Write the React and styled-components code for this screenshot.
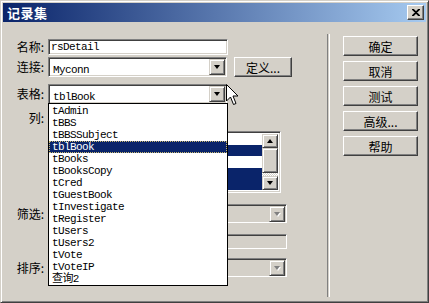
import React from 'react';
import styled, { createGlobalStyle } from 'styled-components';

const Global = createGlobalStyle`
  html, body { margin: 0; padding: 0; background: #d4d0c8; }
  body { font-family: "Noto Sans CJK SC", "Liberation Sans", sans-serif; font-size: 12px; }
`;

const Window = styled.div`
  position: relative;
  width: 429px;
  height: 303px;
  box-sizing: border-box;
  background: #d4d0c8;
  border-top: 1px solid #d4d0c8;
  border-left: 1px solid #d4d0c8;
  border-right: 1px solid #404040;
  border-bottom: 1px solid #404040;
  box-shadow: inset 1px 1px #ffffff, inset -1px -1px #808080;
  padding: 2px;
  display: flex;
  flex-direction: column;
  overflow: hidden;
`;

const TitleBar = styled.div`
  height: 19px;
  display: flex;
  align-items: center;
  justify-content: space-between;
  padding: 0 2px 0 4px;
  background: linear-gradient(to right, #0a246a, #a6caf0);
`;

const Title = styled.span`
  color: #fff;
  font-weight: bold;
  font-size: 13px;
  letter-spacing: 0.5px;
  line-height: 1;
`;

const CloseBox = styled.div`
  width: 17px;
  height: 15px;
  box-sizing: border-box;
  background: #d4d0c8;
  border-top: 1px solid #fff;
  border-left: 1px solid #fff;
  border-right: 1px solid #404040;
  border-bottom: 1px solid #404040;
  box-shadow: inset -1px -1px #808080;
  display: flex;
  align-items: center;
  justify-content: center;
`;

const Body = styled.div`
  flex: 1;
  display: flex;
  position: relative;
`;

const FormPane = styled.div`
  width: 324px;
  display: flex;
  flex-direction: column;
`;

const Row = styled.div`
  display: flex;
  align-items: ${p => p.$align || 'center'};
  margin-top: ${p => p.$top}px;
  height: ${p => p.$h}px;
`;

const Label = styled.div`
  width: 41px;
  padding-right: 4px;
  text-align: right;
  font-size: 12px;
  line-height: 12px;
  color: #000;
  flex-shrink: 0;
`;

const Sunken = styled.div`
  box-sizing: border-box;
  height: 100%;
  width: ${p => p.$w}px;
  background: ${p => (p.$disabled ? '#d4d0c8' : '#ffffff')};
  border-top: 1px solid #808080;
  border-left: 1px solid #808080;
  border-right: 1px solid #ffffff;
  border-bottom: 1px solid #ffffff;
  box-shadow: inset 1px 1px #404040, inset -1px -1px #d4d0c8;
  padding: 1px 2px 1px 2px;
  display: flex;
  align-items: center;
  position: relative;
`;

const MonoText = styled.span`
  font-family: "Liberation Mono", "Noto Sans CJK SC", monospace;
  font-size: 11px;
  letter-spacing: -0.6px;
  line-height: 11px;
  color: ${p => p.$color || '#000'};
  white-space: nowrap;
`;

const SelectValue = styled.div`
  flex: 1;
  padding-left: 2px;
`;

const DropButton = styled.div`
  width: 16px;
  height: 16px;
  box-sizing: border-box;
  background: #d4d0c8;
  border-top: 1px solid #d4d0c8;
  border-left: 1px solid #d4d0c8;
  border-right: 1px solid #404040;
  border-bottom: 1px solid #404040;
  box-shadow: inset 1px 1px #fff, inset -1px -1px #808080;
  display: flex;
  align-items: center;
  justify-content: center;
  margin-right: -1px;
`;

const Triangle = styled.div`
  width: 0;
  height: 0;
  border-left: 3.5px solid transparent;
  border-right: 3.5px solid transparent;
  border-${p => (p.$up ? 'bottom' : 'top')}: 4px solid ${p => (p.$disabled ? '#808080' : '#000')};
  filter: ${p => (p.$disabled ? 'drop-shadow(1px 1px 0 #fff)' : 'none')};
`;

const Button = styled.div`
  box-sizing: border-box;
  width: ${p => p.$w || 75}px;
  height: 20px;
  margin-left: ${p => p.$ml || 0}px;
  background: #d4d0c8;
  border-top: 1px solid #fff;
  border-left: 1px solid #fff;
  border-right: 1px solid #404040;
  border-bottom: 1px solid #404040;
  box-shadow: inset -1px -1px #808080;
  display: flex;
  align-items: center;
  justify-content: center;
  font-size: 12px;
  color: #000;
`;

const ListBox = styled(Sunken)`
  padding: 2px;
  align-items: stretch;
`;

const ListRows = styled.div`
  flex: 1;
  display: flex;
  flex-direction: column;
`;

const ListRow = styled.div`
  height: 12.5px;
  background: ${p => (p.$sel ? '#0a246a' : '#fff')};
`;

const ScrollBar = styled.div`
  width: 16px;
  display: flex;
  flex-direction: column;
`;

const ScrollButton = styled(DropButton)`
  margin-right: 0;
  height: ${p => p.$h || 14}px;
`;

const Track = styled.div`
  flex: 1;
  background-color: #fff;
  background-image: repeating-conic-gradient(#d4d0c8 0 25%, #fff 0 50%);
  background-size: 2px 2px;
`;

const Separator = styled.div`
  width: 1px;
  margin-top: 12px;
  margin-bottom: 3px;
  border-left: 1px solid #808080;
  border-right: 1px solid #ffffff;
`;

const ButtonPane = styled.div`
  display: flex;
  flex-direction: column;
  padding-left: 13px;
  padding-top: 14px;
  gap: 5px;
`;

const Popup = styled.div`
  position: absolute;
  left: 45px;
  top: 81px;
  width: 180px;
  box-sizing: border-box;
  background: #fff;
  border: 1px solid #000;
  padding: 1px 0 0 0;
  display: flex;
  flex-direction: column;
  z-index: 2;
`;

const PopupItem = styled.div`
  height: 12px;
  display: flex;
  align-items: center;
  padding-left: 3px;
  background: ${p => (p.$sel ? '#0a246a' : 'transparent')};
  outline: ${p => (p.$sel ? '1px dotted #c8b870' : 'none')};
  outline-offset: -1px;
`;

const Cursor = styled.svg`
  position: absolute;
  left: 223px;
  top: 62px;
  z-index: 3;
`;

function Select({ w, value, disabled }) {
  return (
    <Sunken $w={w} $disabled={disabled}>
      <SelectValue>{value && <MonoText>{value}</MonoText>}</SelectValue>
      <DropButton>
        <Triangle $disabled={disabled} />
      </DropButton>
    </Sunken>
  );
}

const tables = [
  'tAdmin', 'tBBS', 'tBBSSubject', 'tblBook', 'tBooks', 'tBooksCopy', 'tCred',
  'tGuestBook', 'tInvestigate', 'tRegister', 'tUsers', 'tUsers2', 'tVote', 'tVoteIP', '查询2',
];

export default function App() {
  return (
    <>
      <Global />
      <Window>
        <TitleBar>
          <Title>记录集</Title>
          <CloseBox>
            <svg width="8" height="7" viewBox="0 0 8 7">
              <path d="M0 0 L7 7 M1 0 L8 7 M7 0 L0 7 M8 0 L1 7" stroke="#000" strokeWidth="1.2" />
            </svg>
          </CloseBox>
        </TitleBar>
        <Body>
          <FormPane>
            <Row $top={17} $h={16}>
              <Label>名称:</Label>
              <Sunken $w={180}>
                <MonoText>rsDetail</MonoText>
              </Sunken>
            </Row>
            <Row $top={2} $h={20}>
              <Label>连接:</Label>
              <Select w={179} value="Myconn" />
              <Button $w={58} $ml={7}>定义...</Button>
            </Row>
            <Row $top={7} $h={20}>
              <Label>表格:</Label>
              <Select w={179} value="tblBook" />
            </Row>
            <Row $top={8} $h={12}>
              <Label>列:</Label>
            </Row>
            <Row $top={7} $h={62} $align="flex-start">
              <Label />
              <ListBox $w={233}>
                <ListRows>
                  <ListRow />
                  <ListRow $sel />
                  <ListRow />
                  <ListRow $sel />
                  <ListRow $sel />
                </ListRows>
                <ScrollBar>
                  <ScrollButton $h={14}><Triangle $up /></ScrollButton>
                  <ScrollButton $h={25} />
                  <Track />
                  <ScrollButton $h={14}><Triangle /></ScrollButton>
                </ScrollBar>
              </ListBox>
            </Row>
            <Row $top={11} $h={19}>
              <Label>筛选:</Label>
              <Select w={239} disabled />
            </Row>
            <Row $top={11} $h={15}>
              <Label />
              <Sunken $w={239} $disabled />
            </Row>
            <Row $top={9} $h={19}>
              <Label>排序:</Label>
              <Select w={239} disabled />
            </Row>
          </FormPane>
          <Separator />
          <ButtonPane>
            <Button>确定</Button>
            <Button>取消</Button>
            <Button>测试</Button>
            <Button>高级...</Button>
            <Button>帮助</Button>
          </ButtonPane>

          <Popup>
            {tables.map(t => (
              <PopupItem key={t} $sel={t === 'tblBook'}>
                <MonoText $color={t === 'tblBook' ? '#fff' : '#000'}>{t}</MonoText>
              </PopupItem>
            ))}
          </Popup>
          <Cursor width="13" height="22" viewBox="0 0 13 22">
            <path d="M0.5 0.5 L0.5 17 L4.5 13 L7.5 20.5 L10 19.5 L7 12 L12 12 Z" fill="#fff" stroke="#000" strokeWidth="1" />
          </Cursor>
        </Body>
      </Window>
    </>
  );
}
